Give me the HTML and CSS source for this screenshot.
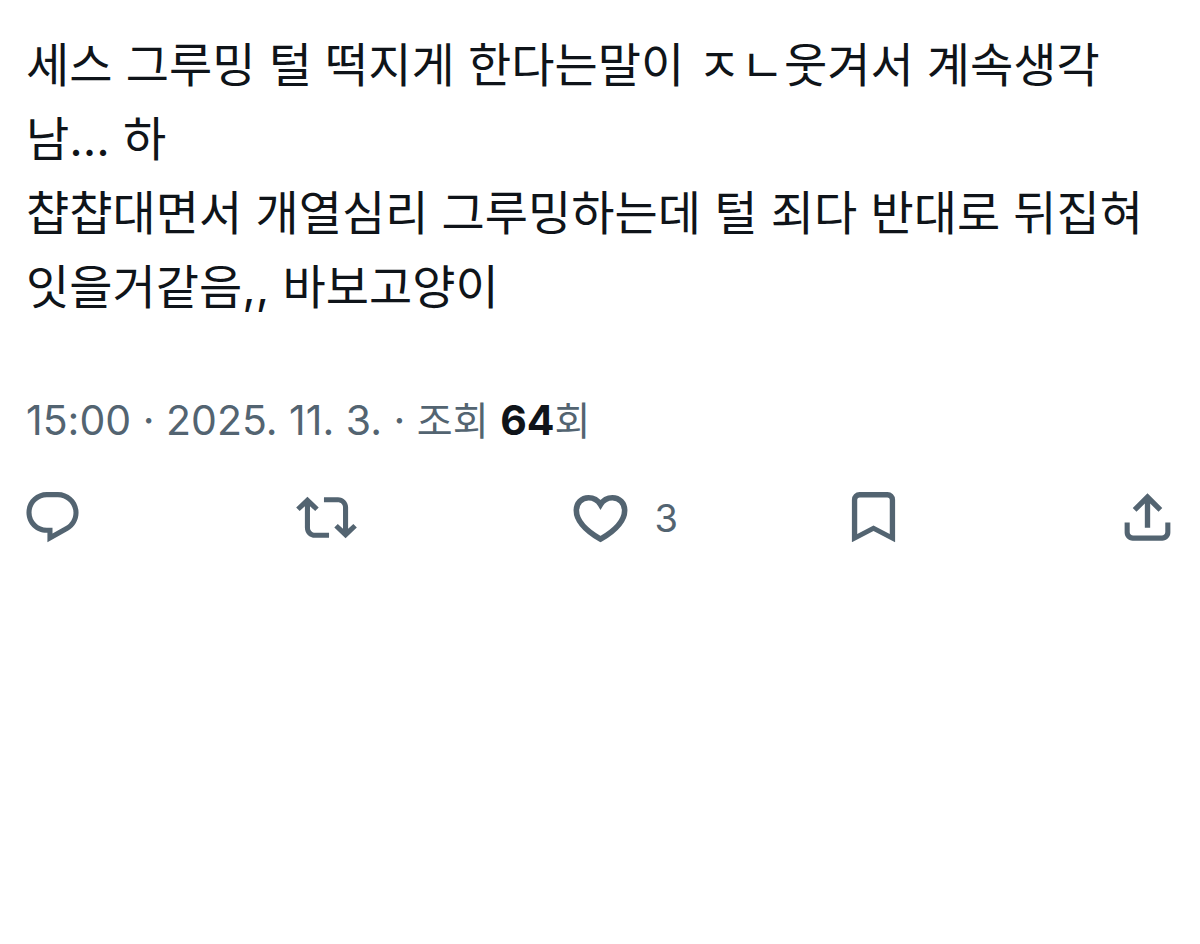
FILE: index.html
```html
<!DOCTYPE html>
<html lang="ko">
<head>
    <meta charset="UTF-8">
    <meta name="viewport" content="width=device-width, initial-scale=1">
    <title>게시물</title>
    <link rel="stylesheet" href="styles.css">
</head>
<body>
<article class="post">
    <p class="text">세스 그루밍 털 떡지게 한다는말이 ㅈㄴ웃겨서 계속생각남... 하<br>챱챱대면서 개열심리 그루밍하는데 털 죄다 반대로 뒤집혀잇을거같음,, 바보고양이</p>
    <p class="meta"><time datetime="2025-11-03T15:00">15:00 · 2025. 11. 3.</time> · <span class="ko">조회</span> <strong>64</strong><span class="ko">회</span></p>
    <div class="actions">
        <div class="item">
            <button type="button" aria-label="답글">
                <svg viewBox="0 0 24 24"><path d="M1.751 10c0-4.42 3.584-8 8.005-8h4.366c4.49 0 8.129 3.64 8.129 8.13 0 2.96-1.607 5.68-4.196 7.11l-8.054 4.46v-3.69h-.067c-4.49.1-8.183-3.51-8.183-8.01zm8.005-6c-3.317 0-6.005 2.69-6.005 6 0 3.37 2.77 6.08 6.138 6.01l.351-.01h1.761v2.3l5.087-2.81c1.951-1.08 3.163-3.13 3.163-5.36 0-3.39-2.744-6.13-6.129-6.13H9.756z"/></svg>
            </button>
        </div>
        <div class="item">
            <button type="button" aria-label="재게시">
                <svg viewBox="0 0 24 24"><path d="M4.5 3.88l4.432 4.14-1.364 1.46L5.5 7.55V16c0 1.1.896 2 2 2H13v2H7.5c-2.209 0-4-1.79-4-4V7.55L1.432 9.48.068 8.02 4.5 3.88zM16.5 6H11V4h5.5c2.209 0 4 1.79 4 4v8.45l2.068-1.93 1.364 1.46-4.432 4.14-4.432-4.14 1.364-1.46 2.068 1.93V8c0-1.1-.896-2-2-2z"/></svg>
            </button>
        </div>
        <div class="item">
            <button type="button" aria-label="마음에 들어요 3개">
                <svg viewBox="0 0 24 24"><path class="line" d="M12 6.9C10.9 5.1 9.2 4.2 7.3 4.2c-2.7 0-4.8 2.1-4.8 5 0 4.3 4.4 8.3 9.5 11.3 5.1-3 9.5-7 9.5-11.3 0-2.9-2.1-5-4.8-5-1.9 0-3.6.9-4.7 2.7z"/></svg>
                <span class="count">3</span>
            </button>
        </div>
        <div class="item">
            <button type="button" aria-label="북마크">
                <svg viewBox="0 0 24 24"><path fill-rule="evenodd" d="M3.5 21.7V5a3 3 0 0 1 3-3h11a3 3 0 0 1 3 3v16.7L12 17.3zM5.6 18.5l6.4-3.4 6.4 3.4V5.1a1 1 0 0 0-1-1H6.6a1 1 0 0 0-1 1z"/></svg>
            </button>
        </div>
        <button type="button" aria-label="공유">
            <svg viewBox="0 0 24 24"><path d="M12 2.5l5.8 5.8-1.46 1.46L13.05 6.5V16h-2.1V6.5L7.66 9.76 6.2 8.3zM3 14h2v3.7c0 .8.6 1.4 1.4 1.4h11.2c.8 0 1.4-.6 1.4-1.4V14h2v3.9c0 1.8-1.4 3.2-3.2 3.2H6.2C4.4 21.1 3 19.7 3 17.9z"/></svg>
        </button>
    </div>
</article>
</body>
</html>
```
FILE: styles.css
```css
* {
    margin: 0;
    padding: 0;
    box-sizing: border-box;
}

body {
    background: #fff;
    color: #0f1419;
    font-family: Inter, "Noto Sans CJK KR", sans-serif;
}

.post {
    padding: 28px 22px;
}

.text {
    padding: 0 4px;
    font-size: 47px;
    line-height: 74px;
}

.meta {
    margin-top: 68px;
    padding: 0 4px;
    color: #536471;
    font-size: 41px;
    line-height: 56px;
}

.meta strong {
    color: #0f1419;
    font-weight: 700;
}

.ko {
    font-size: 39px;
}

.actions {
    display: flex;
    align-items: center;
    margin-top: 38px;
}

.item {
    flex: 1;
}

.actions button {
    display: flex;
    align-items: center;
    gap: 24px;
    border: 0;
    background: none;
    color: #536471;
    font-family: inherit;
    font-size: 38px;
    cursor: pointer;
}

.actions svg {
    width: 61px;
    height: 61px;
    fill: currentColor;
}

.actions .line {
    fill: none;
    stroke: currentColor;
    stroke-width: 2.2;
}
```
